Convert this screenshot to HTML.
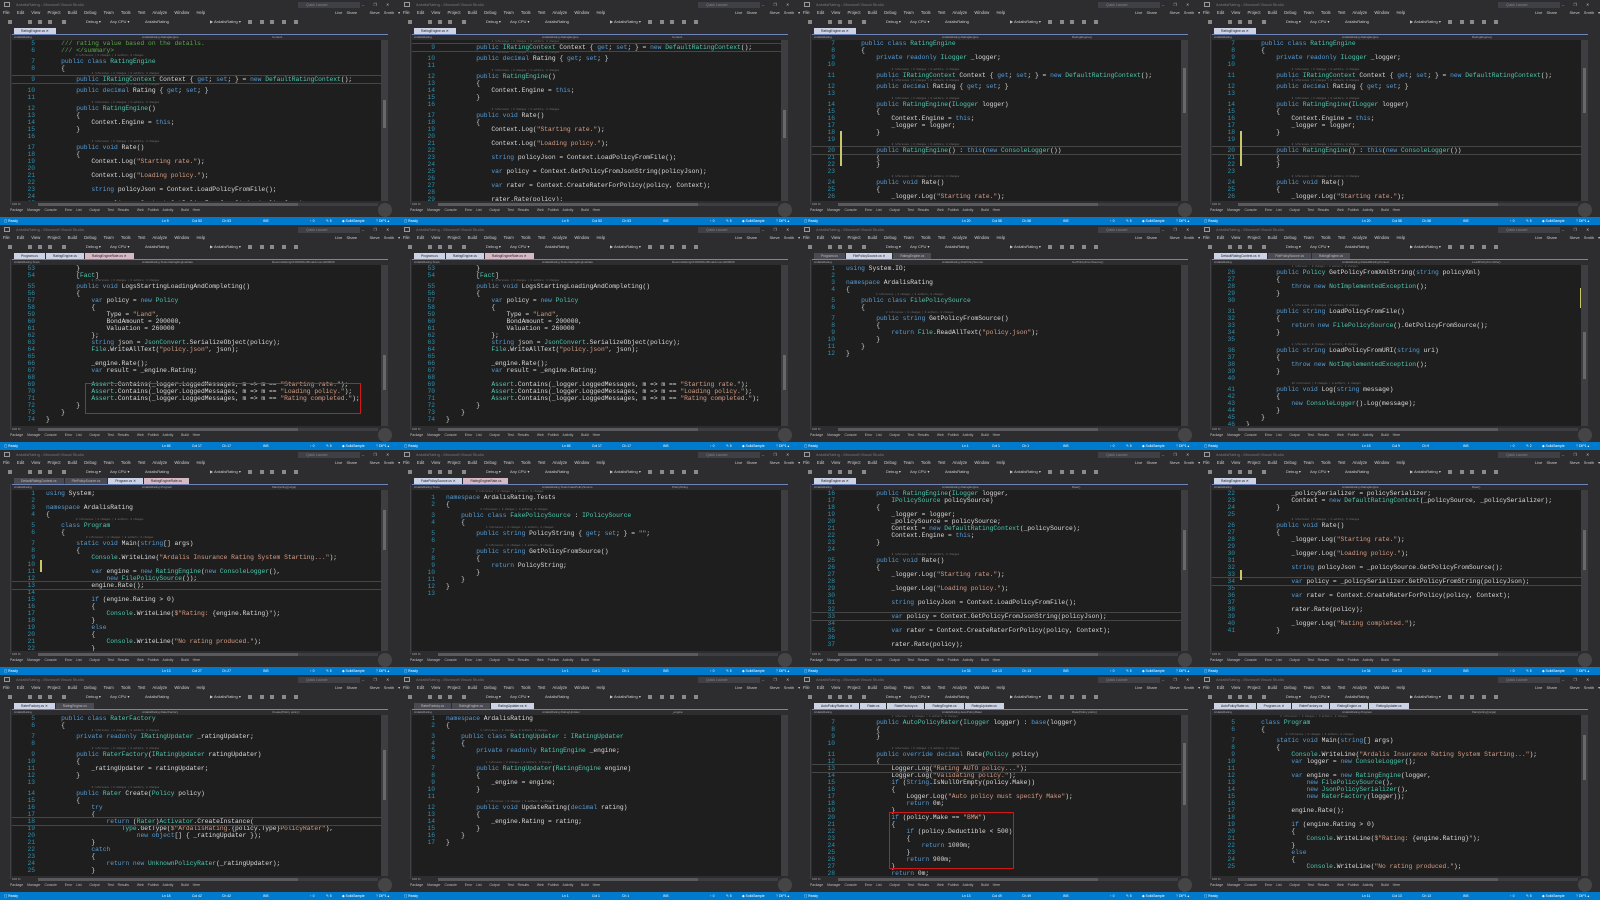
<!DOCTYPE html>
<html><head><meta charset="utf-8"><style>
*{box-sizing:border-box}
body{margin:0;width:1600px;height:900px;background:#2d2d30;position:relative;overflow:hidden;font-family:"Liberation Sans",sans-serif}
.T{position:absolute;width:400px;height:225px;background:#2d2d30;overflow:hidden}
.ic{position:absolute;left:4px;top:2px;width:6px;height:5px;border:1px solid #999}
.ti{position:absolute;left:16px;top:2px;font-size:4px;color:#777;white-space:nowrap}
.ql{position:absolute;left:298px;top:2px;width:62px;height:6px;background:#3f3f46;font-size:3.5px;color:#888;padding-left:8px;line-height:6px}
.wb{position:absolute;left:362px;top:2px;font-size:4px;color:#bbb;word-spacing:8px}
.mn{position:absolute;left:3px;top:10px;font-size:4.2px;color:#ccc;word-spacing:6px;white-space:nowrap}
.rs{position:absolute;left:335px;top:10px;font-size:4px;color:#ccc;white-space:nowrap;word-spacing:3px}
.tl{position:absolute;left:0;top:18px;width:400px;height:8px;font-size:4px;color:#ccc;white-space:nowrap}
.tl span{position:absolute;top:1px}
.sq{position:absolute;top:2px;width:4px;height:4px;background:#8a8a8a}
.tabs{position:absolute;left:14px;top:28px;height:6px;display:flex}
.tab{font-size:3.3px;color:#1e1e1e;background:#cdd3e6;padding:0 7px;line-height:6px;margin-right:1px;white-space:nowrap}
.tab.p{background:#d6b9c4}
.tab.g{background:#4a4a52;color:#bbb}
.bl{position:absolute;left:12px;top:34px;width:376px;height:1px;background:#6f84b8}
.nv{position:absolute;left:12px;top:35px;width:376px;height:5px;background:#2d2d30;font-size:3px;color:#aaa;line-height:5px;white-space:nowrap}
.nv span{position:absolute}
.ls{position:absolute;left:0;top:34px;width:11px;height:170px;background:#2d2d30;border-right:1px solid #3f3f46}
.rsd{position:absolute;left:389px;top:34px;width:11px;height:170px;background:#2d2d30}
.ed{position:absolute;left:12px;top:40px;width:369px;height:161px;background:#1e1e1e;overflow:hidden}
.vs{position:absolute;left:381px;top:40px;width:7px;height:161px;background:#3e3e42}
.th{position:absolute;left:383px;width:3px;background:#686868}
.hs{position:absolute;left:12px;top:201px;width:376px;height:6px;background:#2d2d30;font-size:3px;color:#aaa;line-height:6px}
.hs b{position:absolute;left:26px;top:1.5px;width:340px;height:3px;background:#3e3e42}
.hs b i{position:absolute;left:0;top:0;width:260px;height:3px;background:#5a5a5e}
.tw{position:absolute;left:10px;top:208px;font-size:3.4px;color:#bbb;word-spacing:3px;white-space:nowrap}
.sb{position:absolute;left:0;top:217px;width:400px;height:8px;background:#007acc;font-size:3.4px;color:#fff;line-height:8px;white-space:nowrap}
.sb span{position:absolute}
.cam{position:absolute;left:378px;top:203px;width:14px;height:14px;border-radius:50%;background:#555;opacity:.6}
.c{position:absolute;left:0;top:0;width:369px;font-family:"Liberation Mono",monospace;font-size:6.3px;color:#dcdcdc}
.c div{height:7px;line-height:7px;white-space:pre}
.c i{font-style:normal;display:inline-block;width:23px;text-align:right;color:#2b91af;margin-right:11px}
.c div.l{height:4px;line-height:4px;font-size:2.4px;color:#7a7a7a;padding-left:64px}
.c b{font-weight:normal;color:#569cd6}
.c u{text-decoration:none;color:#4ec9b0}
.c s{text-decoration:none;color:#d69d85}
.c em{font-style:normal;color:#57a64a}
.c .cur{outline:1px solid #464646}
.rb{position:absolute;border:1.5px solid #d01818}
.yb{position:absolute;width:2px;background:#c8c86a}
</style></head><body>

<!-- chrome template is repeated per tile -->
<!-- ROW 1 -->
<div class="T" style="left:0;top:0">
<div class="ic"></div><div class="ti">ArdalisRating - Microsoft Visual Studio</div><div class="ql">Quick Launch</div><div class="wb">– ❐ ✕</div>
<div class="mn">File Edit View Project Build Debug Team Tools Test Analyze Window Help</div><div class="rs">Live Share &nbsp; Steve Smith ▾</div>
<div class="tl"><div class="sq" style="left:8px"></div><div class="sq" style="left:28px"></div><div class="sq" style="left:38px"></div><div class="sq" style="left:48px"></div><div class="sq" style="left:62px"></div><span style="left:86px">Debug ▾</span><span style="left:110px">Any CPU ▾</span><span style="left:145px">ArdalisRating</span><span style="left:210px">▶ ArdalisRating ▾</span><div class="sq" style="left:248px"></div><div class="sq" style="left:260px"></div><div class="sq" style="left:270px"></div><div class="sq" style="left:282px"></div><div class="sq" style="left:294px"></div></div>
<div class="tabs"><div class="tab">RatingEngine.cs ✕</div></div><div class="bl"></div>
<div class="nv"><span style="left:2px">ArdalisRating</span><span style="left:130px">ArdalisRating.RatingEngine</span><span style="left:260px">Context</span></div>
<div class="ls"></div><div class="rsd"></div>
<div class="ed"><div class="c">
<div><i>5</i>    <em>/// rating value based on the details.</em></div>
<div><i>6</i>    <em>/// &lt;/summary&gt;</em></div>
<div class="l">0 references | 0 changes | 0 authors, 0 changes</div>
<div><i>7</i>    <b>public class</b> <u>RatingEngine</u></div>
<div><i>8</i>    {</div>
<div class="l">           0 references | 0 changes | 0 authors, 0 changes</div>
<div class="cur"><i>9</i>        <b>public</b> <u>IRatingContext</u> Context { <b>get</b>; <b>set</b>; } = <b>new</b> <u>DefaultRatingContext</u>();</div>
<div class="l">           0 references | 0 changes | 0 authors, 0 changes</div>
<div><i>10</i>        <b>public decimal</b> Rating { <b>get</b>; <b>set</b>; }</div>
<div><i>11</i></div>
<div class="l">           0 references | 0 changes | 0 authors, 0 changes</div>
<div><i>12</i>        <b>public</b> <u>RatingEngine</u>()</div>
<div><i>13</i>        {</div>
<div><i>14</i>            Context.Engine = <b>this</b>;</div>
<div><i>15</i>        }</div>
<div><i>16</i></div>
<div class="l">           0 references | 0 changes | 0 authors, 0 changes</div>
<div><i>17</i>        <b>public void</b> Rate()</div>
<div><i>18</i>        {</div>
<div><i>19</i>            Context.Log(<s>"Starting rate."</s>);</div>
<div><i>20</i></div>
<div><i>21</i>            Context.Log(<s>"Loading policy."</s>);</div>
<div><i>22</i></div>
<div><i>23</i>            <b>string</b> policyJson = Context.LoadPolicyFromFile();</div>
<div><i>24</i></div>
<div><i>25</i>            <b>var</b> policy = Context.GetPolicyFromJsonString(policyJson);</div>
</div></div>
<div class="vs"></div><div class="th" style="top:100px;height:28px"></div>
<div class="hs">100 %<b><i></i></b></div>
<div class="tw">Package Manager Console &nbsp;Error List &nbsp;Output &nbsp;Test Results &nbsp;Web Publish Activity &nbsp;Build Here</div>
<div class="cam"></div>
<div class="sb"><span style="left:4px">▢ Ready</span><span style="left:162px">Ln 9</span><span style="left:192px">Col 53</span><span style="left:222px">Ch 53</span><span style="left:263px">INS</span><span style="left:310px">↑ 0</span><span style="left:326px">✎ 5</span><span style="left:342px">◆ SolidSample</span><span style="left:376px">ᛘ DIP1 ▴</span></div>
</div>

<div class="T" style="left:400px;top:0">
<div class="ic"></div><div class="ti">ArdalisRating - Microsoft Visual Studio</div><div class="ql">Quick Launch</div><div class="wb">– ❐ ✕</div>
<div class="mn">File Edit View Project Build Debug Team Tools Test Analyze Window Help</div><div class="rs">Live Share &nbsp; Steve Smith ▾</div>
<div class="tl"><div class="sq" style="left:8px"></div><div class="sq" style="left:28px"></div><div class="sq" style="left:38px"></div><div class="sq" style="left:48px"></div><div class="sq" style="left:62px"></div><span style="left:86px">Debug ▾</span><span style="left:110px">Any CPU ▾</span><span style="left:145px">ArdalisRating</span><span style="left:210px">▶ ArdalisRating ▾</span><div class="sq" style="left:248px"></div><div class="sq" style="left:260px"></div><div class="sq" style="left:270px"></div><div class="sq" style="left:282px"></div><div class="sq" style="left:294px"></div></div>
<div class="tabs"><div class="tab">RatingEngine.cs ✕</div></div><div class="bl"></div>
<div class="nv"><span style="left:2px">ArdalisRating</span><span style="left:130px">ArdalisRating.RatingEngine</span><span style="left:260px">Context</span></div>
<div class="ls"></div><div class="rsd"></div>
<div class="ed"><div class="c">
<div class="l">           0 references | 0 changes | 0 authors, 0 changes</div>
<div class="cur"><i>9</i>        <b>public</b> <u>IRatingContext</u> Context { <b>get</b>; <b>set</b>; } = <b>new</b> <u>DefaultRatingContext</u>();</div>
<div class="l">           0 references | 0 changes | 0 authors, 0 changes</div>
<div><i>10</i>        <b>public decimal</b> Rating { <b>get</b>; <b>set</b>; }</div>
<div><i>11</i></div>
<div class="l">           0 references | 0 changes | 0 authors, 0 changes</div>
<div><i>12</i>        <b>public</b> <u>RatingEngine</u>()</div>
<div><i>13</i>        {</div>
<div><i>14</i>            Context.Engine = <b>this</b>;</div>
<div><i>15</i>        }</div>
<div><i>16</i></div>
<div class="l">           0 references | 0 changes | 0 authors, 0 changes</div>
<div><i>17</i>        <b>public void</b> Rate()</div>
<div><i>18</i>        {</div>
<div><i>19</i>            Context.Log(<s>"Starting rate."</s>);</div>
<div><i>20</i></div>
<div><i>21</i>            Context.Log(<s>"Loading policy."</s>);</div>
<div><i>22</i></div>
<div><i>23</i>            <b>string</b> policyJson = Context.LoadPolicyFromFile();</div>
<div><i>24</i></div>
<div><i>25</i>            <b>var</b> policy = Context.GetPolicyFromJsonString(policyJson);</div>
<div><i>26</i></div>
<div><i>27</i>            <b>var</b> rater = Context.CreateRaterForPolicy(policy, Context);</div>
<div><i>28</i></div>
<div><i>29</i>            rater.Rate(policy);</div>
</div></div>
<div class="vs"></div><div class="th" style="top:110px;height:28px"></div>
<div class="hs">100 %<b><i></i></b></div>
<div class="tw">Package Manager Console &nbsp;Error List &nbsp;Output &nbsp;Test Results &nbsp;Web Publish Activity &nbsp;Build Here</div>
<div class="cam"></div>
<div class="sb"><span style="left:4px">▢ Ready</span><span style="left:162px">Ln 9</span><span style="left:192px">Col 53</span><span style="left:222px">Ch 53</span><span style="left:263px">INS</span><span style="left:310px">↑ 0</span><span style="left:326px">✎ 5</span><span style="left:342px">◆ SolidSample</span><span style="left:376px">ᛘ DIP1 ▴</span></div>
</div>

<div class="T" style="left:800px;top:0">
<div class="ic"></div><div class="ti">ArdalisRating - Microsoft Visual Studio</div><div class="ql">Quick Launch</div><div class="wb">– ❐ ✕</div>
<div class="mn">File Edit View Project Build Debug Team Tools Test Analyze Window Help</div><div class="rs">Live Share &nbsp; Steve Smith ▾</div>
<div class="tl"><div class="sq" style="left:8px"></div><div class="sq" style="left:28px"></div><div class="sq" style="left:38px"></div><div class="sq" style="left:48px"></div><div class="sq" style="left:62px"></div><span style="left:86px">Debug ▾</span><span style="left:110px">Any CPU ▾</span><span style="left:145px">ArdalisRating</span><span style="left:210px">▶ ArdalisRating ▾</span><div class="sq" style="left:248px"></div><div class="sq" style="left:260px"></div><div class="sq" style="left:270px"></div><div class="sq" style="left:282px"></div><div class="sq" style="left:294px"></div></div>
<div class="tabs"><div class="tab">RatingEngine.cs ✕</div></div><div class="bl"></div>
<div class="nv"><span style="left:2px">ArdalisRating</span><span style="left:130px">ArdalisRating.RatingEngine</span><span style="left:260px">RatingEngine()</span></div>
<div class="ls"></div><div class="rsd"></div>
<div class="ed"><div class="c">
<div><i>7</i>    <b>public class</b> <u>RatingEngine</u></div>
<div><i>8</i>    {</div>
<div><i>9</i>        <b>private readonly</b> <u>ILogger</u> _logger;</div>
<div><i>10</i></div>
<div class="l">           0 references | 0 changes | 0 authors, 0 changes</div>
<div><i>11</i>        <b>public</b> <u>IRatingContext</u> Context { <b>get</b>; <b>set</b>; } = <b>new</b> <u>DefaultRatingContext</u>();</div>
<div class="l">           0 references | 0 changes | 0 authors, 0 changes</div>
<div><i>12</i>        <b>public decimal</b> Rating { <b>get</b>; <b>set</b>; }</div>
<div><i>13</i></div>
<div class="l">           0 references | 0 changes | 0 authors, 0 changes</div>
<div><i>14</i>        <b>public</b> <u>RatingEngine</u>(<u>ILogger</u> logger)</div>
<div><i>15</i>        {</div>
<div><i>16</i>            Context.Engine = <b>this</b>;</div>
<div><i>17</i>            _logger = logger;</div>
<div><i>18</i>        }</div>
<div><i>19</i></div>
<div class="l">           0 references | 0 changes | 0 authors, 0 changes</div>
<div class="cur"><i>20</i>        <b>public</b> <u>RatingEngine</u>() : <b>this</b>(<b>new</b> <u>ConsoleLogger</u>())</div>
<div><i>21</i>        {</div>
<div><i>22</i>        }</div>
<div><i>23</i></div>
<div class="l">           0 references | 0 changes | 0 authors, 0 changes</div>
<div><i>24</i>        <b>public void</b> Rate()</div>
<div><i>25</i>        {</div>
<div><i>26</i>            _logger.Log(<s>"Starting rate."</s>);</div>
</div></div>
<div class="yb" style="left:40px;top:131px;height:35px"></div>
<div class="vs"></div><div class="th" style="top:68px;height:45px"></div>
<div class="hs">100 %<b><i></i></b></div>
<div class="tw">Package Manager Console &nbsp;Error List &nbsp;Output &nbsp;Test Results &nbsp;Web Publish Activity &nbsp;Build Here</div>
<div class="cam"></div>
<div class="sb"><span style="left:4px">▢ Ready</span><span style="left:162px">Ln 20</span><span style="left:192px">Col 58</span><span style="left:222px">Ch 58</span><span style="left:263px">INS</span><span style="left:310px">↑ 0</span><span style="left:326px">✎ 5</span><span style="left:342px">◆ SolidSample</span><span style="left:376px">ᛘ DIP1 ▴</span></div>
</div>

<div class="T" style="left:1200px;top:0">
<div class="ic"></div><div class="ti">ArdalisRating - Microsoft Visual Studio</div><div class="ql">Quick Launch</div><div class="wb">– ❐ ✕</div>
<div class="mn">File Edit View Project Build Debug Team Tools Test Analyze Window Help</div><div class="rs">Live Share &nbsp; Steve Smith ▾</div>
<div class="tl"><div class="sq" style="left:8px"></div><div class="sq" style="left:28px"></div><div class="sq" style="left:38px"></div><div class="sq" style="left:48px"></div><div class="sq" style="left:62px"></div><span style="left:86px">Debug ▾</span><span style="left:110px">Any CPU ▾</span><span style="left:145px">ArdalisRating</span><span style="left:210px">▶ ArdalisRating ▾</span><div class="sq" style="left:248px"></div><div class="sq" style="left:260px"></div><div class="sq" style="left:270px"></div><div class="sq" style="left:282px"></div><div class="sq" style="left:294px"></div></div>
<div class="tabs"><div class="tab">RatingEngine.cs ✕</div></div><div class="bl"></div>
<div class="nv"><span style="left:2px">ArdalisRating</span><span style="left:130px">ArdalisRating.RatingEngine</span><span style="left:260px">RatingEngine()</span></div>
<div class="ls"></div><div class="rsd"></div>
<div class="ed"><div class="c">
<div><i>7</i>    <b>public class</b> <u>RatingEngine</u></div>
<div><i>8</i>    {</div>
<div><i>9</i>        <b>private readonly</b> <u>ILogger</u> _logger;</div>
<div><i>10</i></div>
<div class="l">           0 references | 0 changes | 0 authors, 0 changes</div>
<div><i>11</i>        <b>public</b> <u>IRatingContext</u> Context { <b>get</b>; <b>set</b>; } = <b>new</b> <u>DefaultRatingContext</u>();</div>
<div class="l">           0 references | 0 changes | 0 authors, 0 changes</div>
<div><i>12</i>        <b>public decimal</b> Rating { <b>get</b>; <b>set</b>; }</div>
<div><i>13</i></div>
<div class="l">           0 references | 0 changes | 0 authors, 0 changes</div>
<div><i>14</i>        <b>public</b> <u>RatingEngine</u>(<u>ILogger</u> logger)</div>
<div><i>15</i>        {</div>
<div><i>16</i>            Context.Engine = <b>this</b>;</div>
<div><i>17</i>            _logger = logger;</div>
<div><i>18</i>        }</div>
<div><i>19</i></div>
<div class="l">           0 references | 0 changes | 0 authors, 0 changes</div>
<div class="cur"><i>20</i>        <b>public</b> <u>RatingEngine</u>() : <b>this</b>(<b>new</b> <u>ConsoleLogger</u>())</div>
<div><i>21</i>        {</div>
<div><i>22</i>        }</div>
<div><i>23</i></div>
<div class="l">           0 references | 0 changes | 0 authors, 0 changes</div>
<div><i>24</i>        <b>public void</b> Rate()</div>
<div><i>25</i>        {</div>
<div><i>26</i>            _logger.Log(<s>"Starting rate."</s>);</div>
</div></div>
<div class="yb" style="left:40px;top:131px;height:35px"></div>
<div class="vs"></div><div class="th" style="top:68px;height:45px"></div>
<div class="hs">100 %<b><i></i></b></div>
<div class="tw">Package Manager Console &nbsp;Error List &nbsp;Output &nbsp;Test Results &nbsp;Web Publish Activity &nbsp;Build Here</div>
<div class="cam"></div>
<div class="sb"><span style="left:4px">▢ Ready</span><span style="left:162px">Ln 20</span><span style="left:192px">Col 58</span><span style="left:222px">Ch 58</span><span style="left:263px">INS</span><span style="left:310px">↑ 0</span><span style="left:326px">✎ 5</span><span style="left:342px">◆ SolidSample</span><span style="left:376px">ᛘ DIP1 ▴</span></div>
</div>

<!-- ROW 2 -->
<div class="T" style="left:0;top:225px">
<div class="ic"></div><div class="ti">ArdalisRating - Microsoft Visual Studio</div><div class="ql">Quick Launch</div><div class="wb">– ❐ ✕</div>
<div class="mn">File Edit View Project Build Debug Team Tools Test Analyze Window Help</div><div class="rs">Live Share &nbsp; Steve Smith ▾</div>
<div class="tl"><div class="sq" style="left:8px"></div><div class="sq" style="left:28px"></div><div class="sq" style="left:38px"></div><div class="sq" style="left:48px"></div><div class="sq" style="left:62px"></div><span style="left:86px">Debug ▾</span><span style="left:110px">Any CPU ▾</span><span style="left:145px">ArdalisRating</span><span style="left:210px">▶ ArdalisRating ▾</span><div class="sq" style="left:248px"></div><div class="sq" style="left:260px"></div><div class="sq" style="left:270px"></div><div class="sq" style="left:282px"></div><div class="sq" style="left:294px"></div></div>
<div class="tabs"><div class="tab">Program.cs</div><div class="tab">RatingEngine.cs</div><div class="tab p">RatingEngineRate.cs ✕</div></div><div class="bl"></div>
<div class="nv"><span style="left:2px">ArdalisRating.Tests</span><span style="left:130px">ArdalisRating.Tests.RatingEngineRate</span><span style="left:260px">ReturnsRatingOf10000ForBondAmount200000</span></div>
<div class="ls"></div><div class="rsd"></div>
<div class="ed"><div class="c">
<div><i>53</i>        }</div>
<div><i>54</i>        [<u>Fact</u>]</div>
<div class="l">           0 references | 0 changes | 0 authors, 0 changes</div>
<div><i>55</i>        <b>public void</b> LogsStartingLoadingAndCompleting()</div>
<div><i>56</i>        {</div>
<div><i>57</i>            <b>var</b> policy = <b>new</b> <u>Policy</u></div>
<div><i>58</i>            {</div>
<div><i>59</i>                Type = <s>"Land"</s>,</div>
<div><i>60</i>                BondAmount = 200000,</div>
<div><i>61</i>                Valuation = 260000</div>
<div><i>62</i>            };</div>
<div><i>63</i>            <b>string</b> json = <u>JsonConvert</u>.SerializeObject(policy);</div>
<div><i>64</i>            <u>File</u>.WriteAllText(<s>"policy.json"</s>, json);</div>
<div><i>65</i></div>
<div><i>66</i>            _engine.Rate();</div>
<div><i>67</i>            <b>var</b> result = _engine.Rating;</div>
<div><i>68</i></div>
<div><i>69</i>            <u>Assert</u>.Contains(_logger.LoggedMessages, m =&gt; m == <s>"Starting rate."</s>);</div>
<div><i>70</i>            <u>Assert</u>.Contains(_logger.LoggedMessages, m =&gt; m == <s>"Loading policy."</s>);</div>
<div><i>71</i>            <u>Assert</u>.Contains(_logger.LoggedMessages, m =&gt; m == <s>"Rating completed."</s>);</div>
<div><i>72</i>        }</div>
<div><i>73</i>    }</div>
<div><i>74</i>}</div>
</div></div>
<div class="rb" style="left:85px;top:158px;width:276px;height:31px"></div>
<div class="vs"></div><div class="th" style="top:130px;height:35px"></div>
<div class="hs">100 %<b><i></i></b></div>
<div class="tw">Package Manager Console &nbsp;Error List &nbsp;Output &nbsp;Test Results &nbsp;Web Publish Activity &nbsp;Build Here</div>
<div class="cam"></div>
<div class="sb"><span style="left:4px">▢ Ready</span><span style="left:162px">Ln 65</span><span style="left:192px">Col 17</span><span style="left:222px">Ch 17</span><span style="left:263px">INS</span><span style="left:310px">↑ 0</span><span style="left:326px">✎ 5</span><span style="left:342px">◆ SolidSample</span><span style="left:376px">ᛘ DIP1 ▴</span></div>
</div>

<div class="T" style="left:400px;top:225px">
<div class="ic"></div><div class="ti">ArdalisRating - Microsoft Visual Studio</div><div class="ql">Quick Launch</div><div class="wb">– ❐ ✕</div>
<div class="mn">File Edit View Project Build Debug Team Tools Test Analyze Window Help</div><div class="rs">Live Share &nbsp; Steve Smith ▾</div>
<div class="tl"><div class="sq" style="left:8px"></div><div class="sq" style="left:28px"></div><div class="sq" style="left:38px"></div><div class="sq" style="left:48px"></div><div class="sq" style="left:62px"></div><span style="left:86px">Debug ▾</span><span style="left:110px">Any CPU ▾</span><span style="left:145px">ArdalisRating</span><span style="left:210px">▶ ArdalisRating ▾</span><div class="sq" style="left:248px"></div><div class="sq" style="left:260px"></div><div class="sq" style="left:270px"></div><div class="sq" style="left:282px"></div><div class="sq" style="left:294px"></div></div>
<div class="tabs"><div class="tab">Program.cs</div><div class="tab">RatingEngine.cs</div><div class="tab p">RatingEngineRate.cs ✕</div></div><div class="bl"></div>
<div class="nv"><span style="left:2px">ArdalisRating.Tests</span><span style="left:130px">ArdalisRating.Tests.RatingEngineRate</span><span style="left:260px">ReturnsRatingOf10000ForBondAmount200000</span></div>
<div class="ls"></div><div class="rsd"></div>
<div class="ed"><div class="c">
<div><i>53</i>        }</div>
<div><i>54</i>        [<u>Fact</u>]</div>
<div class="l">           0 references | 0 changes | 0 authors, 0 changes</div>
<div><i>55</i>        <b>public void</b> LogsStartingLoadingAndCompleting()</div>
<div><i>56</i>        {</div>
<div><i>57</i>            <b>var</b> policy = <b>new</b> <u>Policy</u></div>
<div><i>58</i>            {</div>
<div><i>59</i>                Type = <s>"Land"</s>,</div>
<div><i>60</i>                BondAmount = 200000,</div>
<div><i>61</i>                Valuation = 260000</div>
<div><i>62</i>            };</div>
<div><i>63</i>            <b>string</b> json = <u>JsonConvert</u>.SerializeObject(policy);</div>
<div><i>64</i>            <u>File</u>.WriteAllText(<s>"policy.json"</s>, json);</div>
<div><i>65</i></div>
<div><i>66</i>            _engine.Rate();</div>
<div><i>67</i>            <b>var</b> result = _engine.Rating;</div>
<div><i>68</i></div>
<div><i>69</i>            <u>Assert</u>.Contains(_logger.LoggedMessages, m =&gt; m == <s>"Starting rate."</s>);</div>
<div><i>70</i>            <u>Assert</u>.Contains(_logger.LoggedMessages, m =&gt; m == <s>"Loading policy."</s>);</div>
<div><i>71</i>            <u>Assert</u>.Contains(_logger.LoggedMessages, m =&gt; m == <s>"Rating completed."</s>);</div>
<div><i>72</i>        }</div>
<div><i>73</i>    }</div>
<div><i>74</i>}</div>
</div></div>
<div class="vs"></div><div class="th" style="top:130px;height:35px"></div>
<div class="hs">100 %<b><i></i></b></div>
<div class="tw">Package Manager Console &nbsp;Error List &nbsp;Output &nbsp;Test Results &nbsp;Web Publish Activity &nbsp;Build Here</div>
<div class="cam"></div>
<div class="sb"><span style="left:4px">▢ Ready</span><span style="left:162px">Ln 65</span><span style="left:192px">Col 17</span><span style="left:222px">Ch 17</span><span style="left:263px">INS</span><span style="left:310px">↑ 0</span><span style="left:326px">✎ 5</span><span style="left:342px">◆ SolidSample</span><span style="left:376px">ᛘ DIP1 ▴</span></div>
</div>

<div class="T" style="left:800px;top:225px">
<div class="ic"></div><div class="ti">ArdalisRating - Microsoft Visual Studio</div><div class="ql">Quick Launch</div><div class="wb">– ❐ ✕</div>
<div class="mn">File Edit View Project Build Debug Team Tools Test Analyze Window Help</div><div class="rs">Live Share &nbsp; Steve Smith ▾</div>
<div class="tl"><div class="sq" style="left:8px"></div><div class="sq" style="left:28px"></div><div class="sq" style="left:38px"></div><div class="sq" style="left:48px"></div><div class="sq" style="left:62px"></div><span style="left:86px">Debug ▾</span><span style="left:110px">Any CPU ▾</span><span style="left:145px">ArdalisRating</span><span style="left:210px">▶ ArdalisRating ▾</span><div class="sq" style="left:248px"></div><div class="sq" style="left:260px"></div><div class="sq" style="left:270px"></div><div class="sq" style="left:282px"></div><div class="sq" style="left:294px"></div></div>
<div class="tabs"><div class="tab g">Program.cs</div><div class="tab">FilePolicySource.cs ✕</div><div class="tab g">RatingEngine.cs</div></div><div class="bl"></div>
<div class="nv"><span style="left:2px">ArdalisRating</span><span style="left:130px">ArdalisRating.FilePolicySource</span><span style="left:260px">GetPolicyFromSource()</span></div>
<div class="ls"></div><div class="rsd"></div>
<div class="ed"><div class="c">
<div><i>1</i><b>using</b> System.IO;</div>
<div><i>2</i></div>
<div><i>3</i><b>namespace</b> ArdalisRating</div>
<div><i>4</i>{</div>
<div class="l">0 references | 0 changes | 0 authors, 0 changes</div>
<div><i>5</i>    <b>public class</b> <u>FilePolicySource</u></div>
<div><i>6</i>    {</div>
<div class="l">       0 references | 0 changes | 0 authors, 0 changes</div>
<div><i>7</i>        <b>public string</b> GetPolicyFromSource()</div>
<div><i>8</i>        {</div>
<div><i>9</i>            <b>return</b> <u>File</u>.ReadAllText(<s>"policy.json"</s>);</div>
<div><i>10</i>        }</div>
<div><i>11</i>    }</div>
<div><i>12</i>}</div>
</div></div>
<div class="vs"></div>
<div class="hs">100 %<b><i></i></b></div>
<div class="tw">Package Manager Console &nbsp;Error List &nbsp;Output &nbsp;Test Results &nbsp;Web Publish Activity &nbsp;Build Here</div>
<div class="cam"></div>
<div class="sb"><span style="left:4px">▢ Ready</span><span style="left:162px">Ln 1</span><span style="left:192px">Col 1</span><span style="left:222px">Ch 1</span><span style="left:263px">INS</span><span style="left:310px">↑ 0</span><span style="left:326px">✎ 5</span><span style="left:342px">◆ SolidSample</span><span style="left:376px">ᛘ DIP1 ▴</span></div>
</div>

<div class="T" style="left:1200px;top:225px">
<div class="ic"></div><div class="ti">ArdalisRating - Microsoft Visual Studio</div><div class="ql">Quick Launch</div><div class="wb">– ❐ ✕</div>
<div class="mn">File Edit View Project Build Debug Team Tools Test Analyze Window Help</div><div class="rs">Live Share &nbsp; Steve Smith ▾</div>
<div class="tl"><div class="sq" style="left:8px"></div><div class="sq" style="left:28px"></div><div class="sq" style="left:38px"></div><div class="sq" style="left:48px"></div><div class="sq" style="left:62px"></div><span style="left:86px">Debug ▾</span><span style="left:110px">Any CPU ▾</span><span style="left:145px">ArdalisRating</span><span style="left:210px">▶ ArdalisRating ▾</span><div class="sq" style="left:248px"></div><div class="sq" style="left:260px"></div><div class="sq" style="left:270px"></div><div class="sq" style="left:282px"></div><div class="sq" style="left:294px"></div></div>
<div class="tabs"><div class="tab">DefaultRatingContext.cs ✕</div><div class="tab g">FilePolicySource.cs</div><div class="tab g">RatingEngine.cs</div></div><div class="bl"></div>
<div class="nv"><span style="left:2px">ArdalisRating</span><span style="left:130px">ArdalisRating.DefaultRatingContext</span><span style="left:260px">LoadPolicyFromFile()</span></div>
<div class="ls"></div><div class="rsd"></div>
<div class="ed"><div class="c">
<div class="l">           1 reference | 0 changes | 0 authors, 0 changes</div>
<div><i>26</i>        <b>public</b> <u>Policy</u> GetPolicyFromXmlString(<b>string</b> policyXml)</div>
<div><i>27</i>        {</div>
<div><i>28</i>            <b>throw new</b> <u>NotImplementedException</u>();</div>
<div><i>29</i>        }</div>
<div><i>30</i></div>
<div class="l">           2 references | 0 changes | 0 authors, 0 changes</div>
<div><i>31</i>        <b>public string</b> LoadPolicyFromFile()</div>
<div><i>32</i>        {</div>
<div><i>33</i>            <b>return new</b> <u>FilePolicySource</u>().GetPolicyFromSource();</div>
<div><i>34</i>        }</div>
<div><i>35</i></div>
<div class="l">           1 reference | 0 changes | 0 authors, 0 changes</div>
<div><i>36</i>        <b>public string</b> LoadPolicyFromURI(<b>string</b> uri)</div>
<div><i>37</i>        {</div>
<div><i>38</i>            <b>throw new</b> <u>NotImplementedException</u>();</div>
<div><i>39</i>        }</div>
<div><i>40</i></div>
<div class="l">           20 references | 0 changes | 0 authors, 0 changes</div>
<div><i>41</i>        <b>public void</b> Log(<b>string</b> message)</div>
<div><i>42</i>        {</div>
<div><i>43</i>            <b>new</b> <u>ConsoleLogger</u>().Log(message);</div>
<div><i>44</i>        }</div>
<div><i>45</i>    }</div>
<div><i>46</i>}</div>
<div><i>47</i></div>
</div></div>
<div class="yb" style="left:380px;top:63px;height:20px"></div>
<div class="vs"></div><div class="th" style="top:107px;height:47px"></div>
<div class="hs">100 %<b><i></i></b></div>
<div class="tw">Package Manager Console &nbsp;Error List &nbsp;Output &nbsp;Test Results &nbsp;Web Publish Activity &nbsp;Build Here</div>
<div class="cam"></div>
<div class="sb"><span style="left:4px">▢ Ready</span><span style="left:162px">Ln 15</span><span style="left:192px">Col 9</span><span style="left:222px">Ch 9</span><span style="left:263px">INS</span><span style="left:310px">↑ 0</span><span style="left:326px">✎ 2</span><span style="left:342px">◆ SolidSample</span><span style="left:376px">ᛘ DIP1 ▴</span></div>
</div>

<!-- ROW 3 -->
<div class="T" style="left:0;top:450px">
<div class="ic"></div><div class="ti">ArdalisRating - Microsoft Visual Studio</div><div class="ql">Quick Launch</div><div class="wb">– ❐ ✕</div>
<div class="mn">File Edit View Project Build Debug Team Tools Test Analyze Window Help</div><div class="rs">Live Share &nbsp; Steve Smith ▾</div>
<div class="tl"><div class="sq" style="left:8px"></div><div class="sq" style="left:28px"></div><div class="sq" style="left:38px"></div><div class="sq" style="left:48px"></div><div class="sq" style="left:62px"></div><span style="left:86px">Debug ▾</span><span style="left:110px">Any CPU ▾</span><span style="left:145px">ArdalisRating</span><span style="left:210px">▶ ArdalisRating ▾</span><div class="sq" style="left:248px"></div><div class="sq" style="left:260px"></div><div class="sq" style="left:270px"></div><div class="sq" style="left:282px"></div><div class="sq" style="left:294px"></div></div>
<div class="tabs"><div class="tab g">DefaultRatingContext.cs</div><div class="tab g">FilePolicySource.cs</div><div class="tab">Program.cs ✕</div><div class="tab p">RatingEngineRate.cs</div></div><div class="bl"></div>
<div class="nv"><span style="left:2px">ArdalisRating</span><span style="left:130px">ArdalisRating.Program</span><span style="left:260px">Main(string[] args)</span></div>
<div class="ls"></div><div class="rsd"></div>
<div class="ed"><div class="c">
<div><i>1</i><b>using</b> System;</div>
<div><i>2</i></div>
<div><i>3</i><b>namespace</b> ArdalisRating</div>
<div><i>4</i>{</div>
<div class="l">0 references | 0 changes | 0 authors, 0 changes</div>
<div><i>5</i>    <b>class</b> <u>Program</u></div>
<div><i>6</i>    {</div>
<div class="l">       0 references | 0 changes | 0 authors, 0 changes</div>
<div><i>7</i>        <b>static void</b> Main(<b>string</b>[] args)</div>
<div><i>8</i>        {</div>
<div><i>9</i>            <u>Console</u>.WriteLine(<s>"Ardalis Insurance Rating System Starting..."</s>);</div>
<div><i>10</i></div>
<div><i>11</i>            <b>var</b> engine = <b>new</b> <u>RatingEngine</u>(<b>new</b> <u>ConsoleLogger</u>(),</div>
<div><i>12</i>                <b>new</b> <u>FilePolicySource</u>());</div>
<div class="cur"><i>13</i>            engine.Rate();</div>
<div><i>14</i></div>
<div><i>15</i>            <b>if</b> (engine.Rating &gt; 0)</div>
<div><i>16</i>            {</div>
<div><i>17</i>                <u>Console</u>.WriteLine(<s>$"Rating: </s>{engine.Rating}<s>"</s>);</div>
<div><i>18</i>            }</div>
<div><i>19</i>            <b>else</b></div>
<div><i>20</i>            {</div>
<div><i>21</i>                <u>Console</u>.WriteLine(<s>"No rating produced."</s>);</div>
<div><i>22</i>            }</div>
</div></div>
<div class="yb" style="left:40px;top:110px;height:12px"></div>
<div class="vs"></div><div class="th" style="top:60px;height:40px"></div>
<div class="hs">100 %<b><i></i></b></div>
<div class="tw">Package Manager Console &nbsp;Error List &nbsp;Output &nbsp;Test Results &nbsp;Web Publish Activity &nbsp;Build Here</div>
<div class="cam"></div>
<div class="sb"><span style="left:4px">▢ Ready</span><span style="left:162px">Ln 13</span><span style="left:192px">Col 27</span><span style="left:222px">Ch 27</span><span style="left:263px">INS</span><span style="left:310px">↑ 0</span><span style="left:326px">✎ 5</span><span style="left:342px">◆ SolidSample</span><span style="left:376px">ᛘ DIP1 ▴</span></div>
</div>

<div class="T" style="left:400px;top:450px">
<div class="ic"></div><div class="ti">ArdalisRating - Microsoft Visual Studio</div><div class="ql">Quick Launch</div><div class="wb">– ❐ ✕</div>
<div class="mn">File Edit View Project Build Debug Team Tools Test Analyze Window Help</div><div class="rs">Live Share &nbsp; Steve Smith ▾</div>
<div class="tl"><div class="sq" style="left:8px"></div><div class="sq" style="left:28px"></div><div class="sq" style="left:38px"></div><div class="sq" style="left:48px"></div><div class="sq" style="left:62px"></div><span style="left:86px">Debug ▾</span><span style="left:110px">Any CPU ▾</span><span style="left:145px">ArdalisRating</span><span style="left:210px">▶ ArdalisRating ▾</span><div class="sq" style="left:248px"></div><div class="sq" style="left:260px"></div><div class="sq" style="left:270px"></div><div class="sq" style="left:282px"></div><div class="sq" style="left:294px"></div></div>
<div class="tabs"><div class="tab">FakePolicySource.cs ✕</div><div class="tab p">RatingEngineRate.cs</div></div><div class="bl"></div>
<div class="nv"><span style="left:2px">ArdalisRating.Tests</span><span style="left:130px">ArdalisRating.Tests.FakePolicySource</span><span style="left:260px">PolicyString</span></div>
<div class="ls"></div><div class="rsd"></div>
<div class="ed"><div class="c">
<div class="l">0 references | 0 changes | 0 authors, 0 changes</div>
<div><i>1</i><b>namespace</b> ArdalisRating.Tests</div>
<div><i>2</i>{</div>
<div class="l">   3 references | 0 changes | 0 authors, 0 changes</div>
<div><i>3</i>    <b>public class</b> <u>FakePolicySource</u> : <u>IPolicySource</u></div>
<div><i>4</i>    {</div>
<div class="l">       4 references | 0 changes | 0 authors, 0 changes</div>
<div><i>5</i>        <b>public string</b> PolicyString { <b>get</b>; <b>set</b>; } = <s>""</s>;</div>
<div><i>6</i></div>
<div class="l">       2 references | 0 changes | 0 authors, 0 changes</div>
<div><i>7</i>        <b>public string</b> GetPolicyFromSource()</div>
<div><i>8</i>        {</div>
<div><i>9</i>            <b>return</b> PolicyString;</div>
<div><i>10</i>        }</div>
<div><i>11</i>    }</div>
<div><i>12</i>}</div>
<div><i>13</i></div>
</div></div>
<div class="vs"></div>
<div class="hs">100 %<b><i></i></b></div>
<div class="tw">Package Manager Console &nbsp;Error List &nbsp;Output &nbsp;Test Results &nbsp;Web Publish Activity &nbsp;Build Here</div>
<div class="cam"></div>
<div class="sb"><span style="left:4px">▢ Ready</span><span style="left:162px">Ln 1</span><span style="left:192px">Col 1</span><span style="left:222px">Ch 1</span><span style="left:263px">INS</span><span style="left:310px">↑ 0</span><span style="left:326px">✎ 5</span><span style="left:342px">◆ SolidSample</span><span style="left:376px">ᛘ DIP1 ▴</span></div>
</div>

<div class="T" style="left:800px;top:450px">
<div class="ic"></div><div class="ti">ArdalisRating - Microsoft Visual Studio</div><div class="ql">Quick Launch</div><div class="wb">– ❐ ✕</div>
<div class="mn">File Edit View Project Build Debug Team Tools Test Analyze Window Help</div><div class="rs">Live Share &nbsp; Steve Smith ▾</div>
<div class="tl"><div class="sq" style="left:8px"></div><div class="sq" style="left:28px"></div><div class="sq" style="left:38px"></div><div class="sq" style="left:48px"></div><div class="sq" style="left:62px"></div><span style="left:86px">Debug ▾</span><span style="left:110px">Any CPU ▾</span><span style="left:145px">ArdalisRating</span><span style="left:210px">▶ ArdalisRating ▾</span><div class="sq" style="left:248px"></div><div class="sq" style="left:260px"></div><div class="sq" style="left:270px"></div><div class="sq" style="left:282px"></div><div class="sq" style="left:294px"></div></div>
<div class="tabs"><div class="tab">RatingEngine.cs ✕</div></div><div class="bl"></div>
<div class="nv"><span style="left:2px">ArdalisRating</span><span style="left:130px">ArdalisRating.RatingEngine</span><span style="left:260px">Rate()</span></div>
<div class="ls"></div><div class="rsd"></div>
<div class="ed"><div class="c">
<div><i>16</i>        <b>public</b> <u>RatingEngine</u>(<u>ILogger</u> logger,</div>
<div><i>17</i>            <u>IPolicySource</u> policySource)</div>
<div><i>18</i>        {</div>
<div><i>19</i>            _logger = logger;</div>
<div><i>20</i>            _policySource = policySource;</div>
<div><i>21</i>            Context = <b>new</b> <u>DefaultRatingContext</u>(_policySource);</div>
<div><i>22</i>            Context.Engine = <b>this</b>;</div>
<div><i>23</i>        }</div>
<div><i>24</i></div>
<div class="l">           0 references | 0 changes | 0 authors, 0 changes</div>
<div><i>25</i>        <b>public void</b> Rate()</div>
<div><i>26</i>        {</div>
<div><i>27</i>            _logger.Log(<s>"Starting rate."</s>);</div>
<div><i>28</i></div>
<div><i>29</i>            _logger.Log(<s>"Loading policy."</s>);</div>
<div><i>30</i></div>
<div><i>31</i>            <b>string</b> policyJson = Context.LoadPolicyFromFile();</div>
<div><i>32</i></div>
<div class="cur"><i>33</i>            <b>var</b> policy = Context.GetPolicyFromJsonString(policyJson);</div>
<div><i>34</i></div>
<div><i>35</i>            <b>var</b> rater = Context.CreateRaterForPolicy(policy, Context);</div>
<div><i>36</i></div>
<div><i>37</i>            rater.Rate(policy);</div>
</div></div>
<div class="vs"></div><div class="th" style="top:80px;height:40px"></div>
<div class="hs">100 %<b><i></i></b></div>
<div class="tw">Package Manager Console &nbsp;Error List &nbsp;Output &nbsp;Test Results &nbsp;Web Publish Activity &nbsp;Build Here</div>
<div class="cam"></div>
<div class="sb"><span style="left:4px">▢ Ready</span><span style="left:162px">Ln 33</span><span style="left:192px">Col 13</span><span style="left:222px">Ch 13</span><span style="left:263px">INS</span><span style="left:310px">↑ 0</span><span style="left:326px">✎ 5</span><span style="left:342px">◆ SolidSample</span><span style="left:376px">ᛘ DIP1 ▴</span></div>
</div>

<div class="T" style="left:1200px;top:450px">
<div class="ic"></div><div class="ti">ArdalisRating - Microsoft Visual Studio</div><div class="ql">Quick Launch</div><div class="wb">– ❐ ✕</div>
<div class="mn">File Edit View Project Build Debug Team Tools Test Analyze Window Help</div><div class="rs">Live Share &nbsp; Steve Smith ▾</div>
<div class="tl"><div class="sq" style="left:8px"></div><div class="sq" style="left:28px"></div><div class="sq" style="left:38px"></div><div class="sq" style="left:48px"></div><div class="sq" style="left:62px"></div><span style="left:86px">Debug ▾</span><span style="left:110px">Any CPU ▾</span><span style="left:145px">ArdalisRating</span><span style="left:210px">▶ ArdalisRating ▾</span><div class="sq" style="left:248px"></div><div class="sq" style="left:260px"></div><div class="sq" style="left:270px"></div><div class="sq" style="left:282px"></div><div class="sq" style="left:294px"></div></div>
<div class="tabs"><div class="tab">RatingEngine.cs ✕</div></div><div class="bl"></div>
<div class="nv"><span style="left:2px">ArdalisRating</span><span style="left:130px">ArdalisRating.RatingEngine</span><span style="left:260px">Rate()</span></div>
<div class="ls"></div><div class="rsd"></div>
<div class="ed"><div class="c">
<div><i>22</i>            _policySerializer = policySerializer;</div>
<div><i>23</i>            Context = <b>new</b> <u>DefaultRatingContext</u>(_policySource, _policySerializer);</div>
<div><i>24</i>        }</div>
<div><i>25</i></div>
<div class="l">           0 references | 0 changes | 0 authors, 0 changes</div>
<div><i>26</i>        <b>public void</b> Rate()</div>
<div><i>27</i>        {</div>
<div><i>28</i>            _logger.Log(<s>"Starting rate."</s>);</div>
<div><i>29</i></div>
<div><i>30</i>            _logger.Log(<s>"Loading policy."</s>);</div>
<div><i>31</i></div>
<div><i>32</i>            <b>string</b> policyJson = _policySource.GetPolicyFromSource();</div>
<div><i>33</i></div>
<div class="cur"><i>34</i>            <b>var</b> policy = _policySerializer.GetPolicyFromString(policyJson);</div>
<div><i>35</i></div>
<div><i>36</i>            <b>var</b> rater = Context.CreateRaterForPolicy(policy, Context);</div>
<div><i>37</i></div>
<div><i>38</i>            rater.Rate(policy);</div>
<div><i>39</i></div>
<div><i>40</i>            _logger.Log(<s>"Rating completed."</s>);</div>
<div><i>41</i>        }</div>
</div></div>
<div class="yb" style="left:40px;top:120px;height:10px"></div>
<div class="vs"></div><div class="th" style="top:80px;height:40px"></div>
<div class="hs">100 %<b><i></i></b></div>
<div class="tw">Package Manager Console &nbsp;Error List &nbsp;Output &nbsp;Test Results &nbsp;Web Publish Activity &nbsp;Build Here</div>
<div class="cam"></div>
<div class="sb"><span style="left:4px">▢ Ready</span><span style="left:162px">Ln 34</span><span style="left:192px">Col 13</span><span style="left:222px">Ch 13</span><span style="left:263px">INS</span><span style="left:310px">↑ 0</span><span style="left:326px">✎ 5</span><span style="left:342px">◆ SolidSample</span><span style="left:376px">ᛘ DIP1 ▴</span></div>
</div>

<!-- ROW 4 -->
<div class="T" style="left:0;top:675px">
<div class="ic"></div><div class="ti">ArdalisRating - Microsoft Visual Studio</div><div class="ql">Quick Launch</div><div class="wb">– ❐ ✕</div>
<div class="mn">File Edit View Project Build Debug Team Tools Test Analyze Window Help</div><div class="rs">Live Share &nbsp; Steve Smith ▾</div>
<div class="tl"><div class="sq" style="left:8px"></div><div class="sq" style="left:28px"></div><div class="sq" style="left:38px"></div><div class="sq" style="left:48px"></div><div class="sq" style="left:62px"></div><span style="left:86px">Debug ▾</span><span style="left:110px">Any CPU ▾</span><span style="left:145px">ArdalisRating</span><span style="left:210px">▶ ArdalisRating ▾</span><div class="sq" style="left:248px"></div><div class="sq" style="left:260px"></div><div class="sq" style="left:270px"></div><div class="sq" style="left:282px"></div><div class="sq" style="left:294px"></div></div>
<div class="tabs"><div class="tab">RaterFactory.cs ✕</div><div class="tab g">RatingEngine.cs</div></div><div class="bl"></div>
<div class="nv"><span style="left:2px">ArdalisRating</span><span style="left:130px">ArdalisRating.RaterFactory</span><span style="left:260px">Create(Policy policy)</span></div>
<div class="ls"></div><div class="rsd"></div>
<div class="ed"><div class="c">
<div><i>5</i>    <b>public class</b> <u>RaterFactory</u></div>
<div><i>6</i>    {</div>
<div class="l">           0 references | 0 changes | 0 authors, 0 changes</div>
<div><i>7</i>        <b>private readonly</b> <u>IRatingUpdater</u> _ratingUpdater;</div>
<div><i>8</i></div>
<div class="l">           0 references | 0 changes | 0 authors, 0 changes</div>
<div><i>9</i>        <b>public</b> <u>RaterFactory</u>(<u>IRatingUpdater</u> ratingUpdater)</div>
<div><i>10</i>        {</div>
<div><i>11</i>            _ratingUpdater = ratingUpdater;</div>
<div><i>12</i>        }</div>
<div><i>13</i></div>
<div class="l">           0 references | 0 changes | 0 authors, 0 changes</div>
<div><i>14</i>        <b>public</b> <u>Rater</u> Create(<u>Policy</u> policy)</div>
<div><i>15</i>        {</div>
<div><i>16</i>            <b>try</b></div>
<div><i>17</i>            {</div>
<div class="cur"><i>18</i>                <b>return</b> (<u>Rater</u>)<u>Activator</u>.CreateInstance(</div>
<div><i>19</i>                    <u>Type</u>.GetType(<s>$"ArdalisRating.</s>{policy.Type}<s>PolicyRater"</s>),</div>
<div><i>20</i>                        <b>new object</b>[] { _ratingUpdater });</div>
<div><i>21</i>            }</div>
<div><i>22</i>            <b>catch</b></div>
<div><i>23</i>            {</div>
<div><i>24</i>                <b>return new</b> <u>UnknownPolicyRater</u>(_ratingUpdater);</div>
<div><i>25</i>            }</div>
</div></div>
<div class="vs"></div><div class="th" style="top:75px;height:50px"></div>
<div class="hs">100 %<b><i></i></b></div>
<div class="tw">Package Manager Console &nbsp;Error List &nbsp;Output &nbsp;Test Results &nbsp;Web Publish Activity &nbsp;Build Here</div>
<div class="cam"></div>
<div class="sb"><span style="left:4px">▢ Ready</span><span style="left:162px">Ln 18</span><span style="left:192px">Col 42</span><span style="left:222px">Ch 42</span><span style="left:263px">INS</span><span style="left:310px">↑ 0</span><span style="left:326px">✎ 5</span><span style="left:342px">◆ SolidSample</span><span style="left:376px">ᛘ DIP1 ▴</span></div>
</div>

<div class="T" style="left:400px;top:675px">
<div class="ic"></div><div class="ti">ArdalisRating - Microsoft Visual Studio</div><div class="ql">Quick Launch</div><div class="wb">– ❐ ✕</div>
<div class="mn">File Edit View Project Build Debug Team Tools Test Analyze Window Help</div><div class="rs">Live Share &nbsp; Steve Smith ▾</div>
<div class="tl"><div class="sq" style="left:8px"></div><div class="sq" style="left:28px"></div><div class="sq" style="left:38px"></div><div class="sq" style="left:48px"></div><div class="sq" style="left:62px"></div><span style="left:86px">Debug ▾</span><span style="left:110px">Any CPU ▾</span><span style="left:145px">ArdalisRating</span><span style="left:210px">▶ ArdalisRating ▾</span><div class="sq" style="left:248px"></div><div class="sq" style="left:260px"></div><div class="sq" style="left:270px"></div><div class="sq" style="left:282px"></div><div class="sq" style="left:294px"></div></div>
<div class="tabs"><div class="tab g">RaterFactory.cs</div><div class="tab g">RatingEngine.cs</div><div class="tab">RatingUpdater.cs ✕</div></div><div class="bl"></div>
<div class="nv"><span style="left:2px">ArdalisRating</span><span style="left:130px">ArdalisRating.RatingUpdater</span><span style="left:260px">_engine</span></div>
<div class="ls"></div><div class="rsd"></div>
<div class="ed"><div class="c">
<div><i>1</i><b>namespace</b> ArdalisRating</div>
<div><i>2</i>{</div>
<div class="l">   3 references | 0 changes | 0 authors, 0 changes</div>
<div><i>3</i>    <b>public class</b> <u>RatingUpdater</u> : <u>IRatingUpdater</u></div>
<div><i>4</i>    {</div>
<div><i>5</i>        <b>private readonly</b> <u>RatingEngine</u> _engine;</div>
<div><i>6</i></div>
<div class="l">       1 reference | 0 changes | 0 authors, 0 changes</div>
<div><i>7</i>        <b>public</b> <u>RatingUpdater</u>(<u>RatingEngine</u> engine)</div>
<div><i>8</i>        {</div>
<div><i>9</i>            _engine = engine;</div>
<div><i>10</i>        }</div>
<div><i>11</i></div>
<div class="l">       2 references | 0 changes | 0 authors, 0 changes</div>
<div><i>12</i>        <b>public void</b> UpdateRating(<b>decimal</b> rating)</div>
<div><i>13</i>        {</div>
<div><i>14</i>            _engine.Rating = rating;</div>
<div><i>15</i>        }</div>
<div><i>16</i>    }</div>
<div><i>17</i>}</div>
</div></div>
<div class="vs"></div>
<div class="hs">100 %<b><i></i></b></div>
<div class="tw">Package Manager Console &nbsp;Error List &nbsp;Output &nbsp;Test Results &nbsp;Web Publish Activity &nbsp;Build Here</div>
<div class="cam"></div>
<div class="sb"><span style="left:4px">▢ Ready</span><span style="left:162px">Ln 1</span><span style="left:192px">Col 1</span><span style="left:222px">Ch 1</span><span style="left:263px">INS</span><span style="left:310px">↑ 0</span><span style="left:326px">✎ 5</span><span style="left:342px">◆ SolidSample</span><span style="left:376px">ᛘ DIP1 ▴</span></div>
</div>

<div class="T" style="left:800px;top:675px">
<div class="ic"></div><div class="ti">ArdalisRating - Microsoft Visual Studio</div><div class="ql">Quick Launch</div><div class="wb">– ❐ ✕</div>
<div class="mn">File Edit View Project Build Debug Team Tools Test Analyze Window Help</div><div class="rs">Live Share &nbsp; Steve Smith ▾</div>
<div class="tl"><div class="sq" style="left:8px"></div><div class="sq" style="left:28px"></div><div class="sq" style="left:38px"></div><div class="sq" style="left:48px"></div><div class="sq" style="left:62px"></div><span style="left:86px">Debug ▾</span><span style="left:110px">Any CPU ▾</span><span style="left:145px">ArdalisRating</span><span style="left:210px">▶ ArdalisRating ▾</span><div class="sq" style="left:248px"></div><div class="sq" style="left:260px"></div><div class="sq" style="left:270px"></div><div class="sq" style="left:282px"></div><div class="sq" style="left:294px"></div></div>
<div class="tabs"><div class="tab">AutoPolicyRater.cs ✕</div><div class="tab">Rater.cs</div><div class="tab">RaterFactory.cs</div><div class="tab">RatingEngine.cs</div><div class="tab">RatingUpdater.cs</div></div><div class="bl"></div>
<div class="nv"><span style="left:2px">ArdalisRating</span><span style="left:130px">ArdalisRating.AutoPolicyRater</span><span style="left:260px">Rate(Policy policy)</span></div>
<div class="ls"></div><div class="rsd"></div>
<div class="ed"><div class="c">
<div class="l">           1 reference | 0 changes | 0 authors, 0 changes</div>
<div><i>7</i>        <b>public</b> <u>AutoPolicyRater</u>(<u>ILogger</u> logger) : <b>base</b>(logger)</div>
<div><i>8</i>        {</div>
<div><i>9</i>        }</div>
<div><i>10</i></div>
<div class="l">           4 references | 0 changes | 0 authors, 0 changes</div>
<div><i>11</i>        <b>public override decimal</b> Rate(<u>Policy</u> policy)</div>
<div><i>12</i>        {</div>
<div class="cur"><i>13</i>            Logger.Log(<s>"Rating AUTO policy..."</s>);</div>
<div><i>14</i>            Logger.Log(<s>"Validating policy."</s>);</div>
<div><i>15</i>            <b>if</b> (<b>String</b>.IsNullOrEmpty(policy.Make))</div>
<div><i>16</i>            {</div>
<div><i>17</i>                Logger.Log(<s>"Auto policy must specify Make"</s>);</div>
<div><i>18</i>                <b>return</b> 0m;</div>
<div><i>19</i>            }</div>
<div><i>20</i>            <b>if</b> (policy.Make == <s>"BMW"</s>)</div>
<div><i>21</i>            {</div>
<div><i>22</i>                <b>if</b> (policy.Deductible &lt; 500)</div>
<div><i>23</i>                {</div>
<div><i>24</i>                    <b>return</b> 1000m;</div>
<div><i>25</i>                }</div>
<div><i>26</i>                <b>return</b> 900m;</div>
<div><i>27</i>            }</div>
<div><i>28</i>            <b>return</b> 0m;</div>
</div></div>
<div class="rb" style="left:89px;top:137px;width:125px;height:57px"></div>
<div class="vs"></div><div class="th" style="top:68px;height:62px"></div>
<div class="hs">100 %<b><i></i></b></div>
<div class="tw">Package Manager Console &nbsp;Error List &nbsp;Output &nbsp;Test Results &nbsp;Web Publish Activity &nbsp;Build Here</div>
<div class="cam"></div>
<div class="sb"><span style="left:4px">▢ Ready</span><span style="left:162px">Ln 13</span><span style="left:192px">Col 49</span><span style="left:222px">Ch 49</span><span style="left:263px">INS</span><span style="left:310px">↑ 0</span><span style="left:326px">✎ 5</span><span style="left:342px">◆ SolidSample</span><span style="left:376px">ᛘ DIP1 ▴</span></div>
</div>

<div class="T" style="left:1200px;top:675px">
<div class="ic"></div><div class="ti">ArdalisRating - Microsoft Visual Studio</div><div class="ql">Quick Launch</div><div class="wb">– ❐ ✕</div>
<div class="mn">File Edit View Project Build Debug Team Tools Test Analyze Window Help</div><div class="rs">Live Share &nbsp; Steve Smith ▾</div>
<div class="tl"><div class="sq" style="left:8px"></div><div class="sq" style="left:28px"></div><div class="sq" style="left:38px"></div><div class="sq" style="left:48px"></div><div class="sq" style="left:62px"></div><span style="left:86px">Debug ▾</span><span style="left:110px">Any CPU ▾</span><span style="left:145px">ArdalisRating</span><span style="left:210px">▶ ArdalisRating ▾</span><div class="sq" style="left:248px"></div><div class="sq" style="left:260px"></div><div class="sq" style="left:270px"></div><div class="sq" style="left:282px"></div><div class="sq" style="left:294px"></div></div>
<div class="tabs"><div class="tab">AutoPolicyRater.cs</div><div class="tab">Program.cs ✕</div><div class="tab">RaterFactory.cs</div><div class="tab">RatingEngine.cs</div><div class="tab">RatingUpdater.cs</div></div><div class="bl"></div>
<div class="nv"><span style="left:2px">ArdalisRating</span><span style="left:130px">ArdalisRating.Program</span><span style="left:260px">Main(string[] args)</span></div>
<div class="ls"></div><div class="rsd"></div>
<div class="ed"><div class="c">
<div class="l">   0 references | 0 changes | 0 authors, 0 changes</div>
<div><i>5</i>    <b>class</b> <u>Program</u></div>
<div><i>6</i>    {</div>
<div class="l">       0 references | 0 changes | 0 authors, 0 changes</div>
<div><i>7</i>        <b>static void</b> Main(<b>string</b>[] args)</div>
<div><i>8</i>        {</div>
<div><i>9</i>            <u>Console</u>.WriteLine(<s>"Ardalis Insurance Rating System Starting..."</s>);</div>
<div><i>10</i>            <b>var</b> logger = <b>new</b> <u>ConsoleLogger</u>();</div>
<div><i>11</i></div>
<div><i>12</i>            <b>var</b> engine = <b>new</b> <u>RatingEngine</u>(logger,</div>
<div><i>13</i>                <b>new</b> <u>FilePolicySource</u>(),</div>
<div><i>14</i>                <b>new</b> <u>JsonPolicySerializer</u>(),</div>
<div><i>15</i>                <b>new</b> <u>RaterFactory</u>(logger));</div>
<div><i>16</i></div>
<div><i>17</i>            engine.Rate();</div>
<div><i>18</i></div>
<div><i>19</i>            <b>if</b> (engine.Rating &gt; 0)</div>
<div><i>20</i>            {</div>
<div><i>21</i>                <u>Console</u>.WriteLine(<s>$"Rating: </s>{engine.Rating}<s>"</s>);</div>
<div><i>22</i>            }</div>
<div><i>23</i>            <b>else</b></div>
<div><i>24</i>            {</div>
<div><i>25</i>                <u>Console</u>.WriteLine(<s>"No rating produced."</s>);</div>
</div></div>
<div class="vs"></div><div class="th" style="top:60px;height:45px"></div>
<div class="hs">100 %<b><i></i></b></div>
<div class="tw">Package Manager Console &nbsp;Error List &nbsp;Output &nbsp;Test Results &nbsp;Web Publish Activity &nbsp;Build Here</div>
<div class="cam"></div>
<div class="sb"><span style="left:4px">▢ Ready</span><span style="left:162px">Ln 11</span><span style="left:192px">Col 13</span><span style="left:222px">Ch 13</span><span style="left:263px">INS</span><span style="left:310px">↑ 0</span><span style="left:326px">✎ 5</span><span style="left:342px">◆ SolidSample</span><span style="left:376px">ᛘ DIP1 ▴</span></div>
</div>

</body></html>
